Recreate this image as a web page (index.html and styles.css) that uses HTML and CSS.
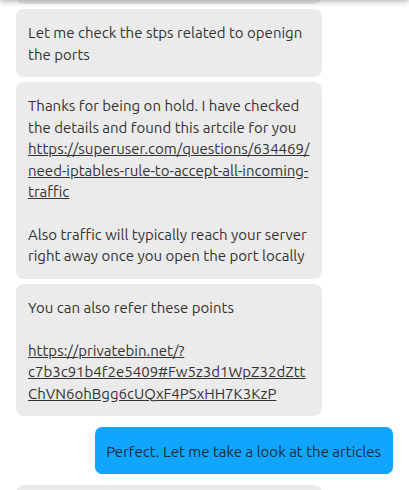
FILE: index.html
```html
<!DOCTYPE html>
<html lang="en">
<head>
<meta charset="utf-8">
<title>Chat</title>
<link rel="stylesheet" href="styles.css">
</head>
<body>
<div class="topbar"></div>
<div class="chat">
  <div class="msg agent cut">Okay, one moment please</div>
  <div class="msg agent">Let me check the stps related to openign the ports</div>
  <div class="msg agent">Thanks for being on hold. I have checked the details and found this artcile for you <a href="#">https://superuser.com/questions/634469/<br>need-iptables-rule-to-accept-all-incoming-<br>traffic</a><br><br>Also traffic will typically reach your server right away once you open the port locally</div>
  <div class="msg agent">You can also refer these points<br><br><a href="#">https://privatebin.net/?<br>c7b3c91b4f2e5409#Fw5z3d1WpZ32dZtt<br>ChVN6ohBgg6cUQxF4PSxHH7K3KzP</a></div>
  <div class="msg user">Perfect. Let me take a look at the articles</div>
  <div class="msg agent">Sure, take your time</div>
</div>
</body>
</html>
```
FILE: styles.css
```css
html, body {
  margin: 0;
  padding: 0;
  background: #ffffff;
  overflow: hidden;
}
body {
  font-family: "Ubuntu", "Lato", "Open Sans", sans-serif;
  font-size: 15px;
  line-height: 21.43px;
  color: #333333;
  height: 490px;
  position: relative;
}
.topbar {
  position: absolute;
  top: -10px;
  left: 0;
  right: 0;
  height: 10px;
  background: #ffffff;
  box-shadow: 0 1px 6px rgba(0, 0, 0, 0.35);
  z-index: 2;
}
.chat {
  display: flex;
  flex-direction: column;
  padding: 0 16px;
  margin-top: -42px;
}
.msg {
  box-sizing: border-box;
  padding: 13px 12px 12px;
  border-radius: 8px;
}
.agent {
  align-self: flex-start;
  width: 306px;
  background: #ebebeb;
  margin-bottom: 5px;
}
.agent a {
  color: #333333;
  text-decoration: underline;
}
.user {
  align-self: flex-end;
  background: #10a5fe;
  color: #1d2b38;
  padding: 13.5px 12px 12.5px 11px;
  margin: 6px 0 11px;
  border-radius: 7px;
}
```
